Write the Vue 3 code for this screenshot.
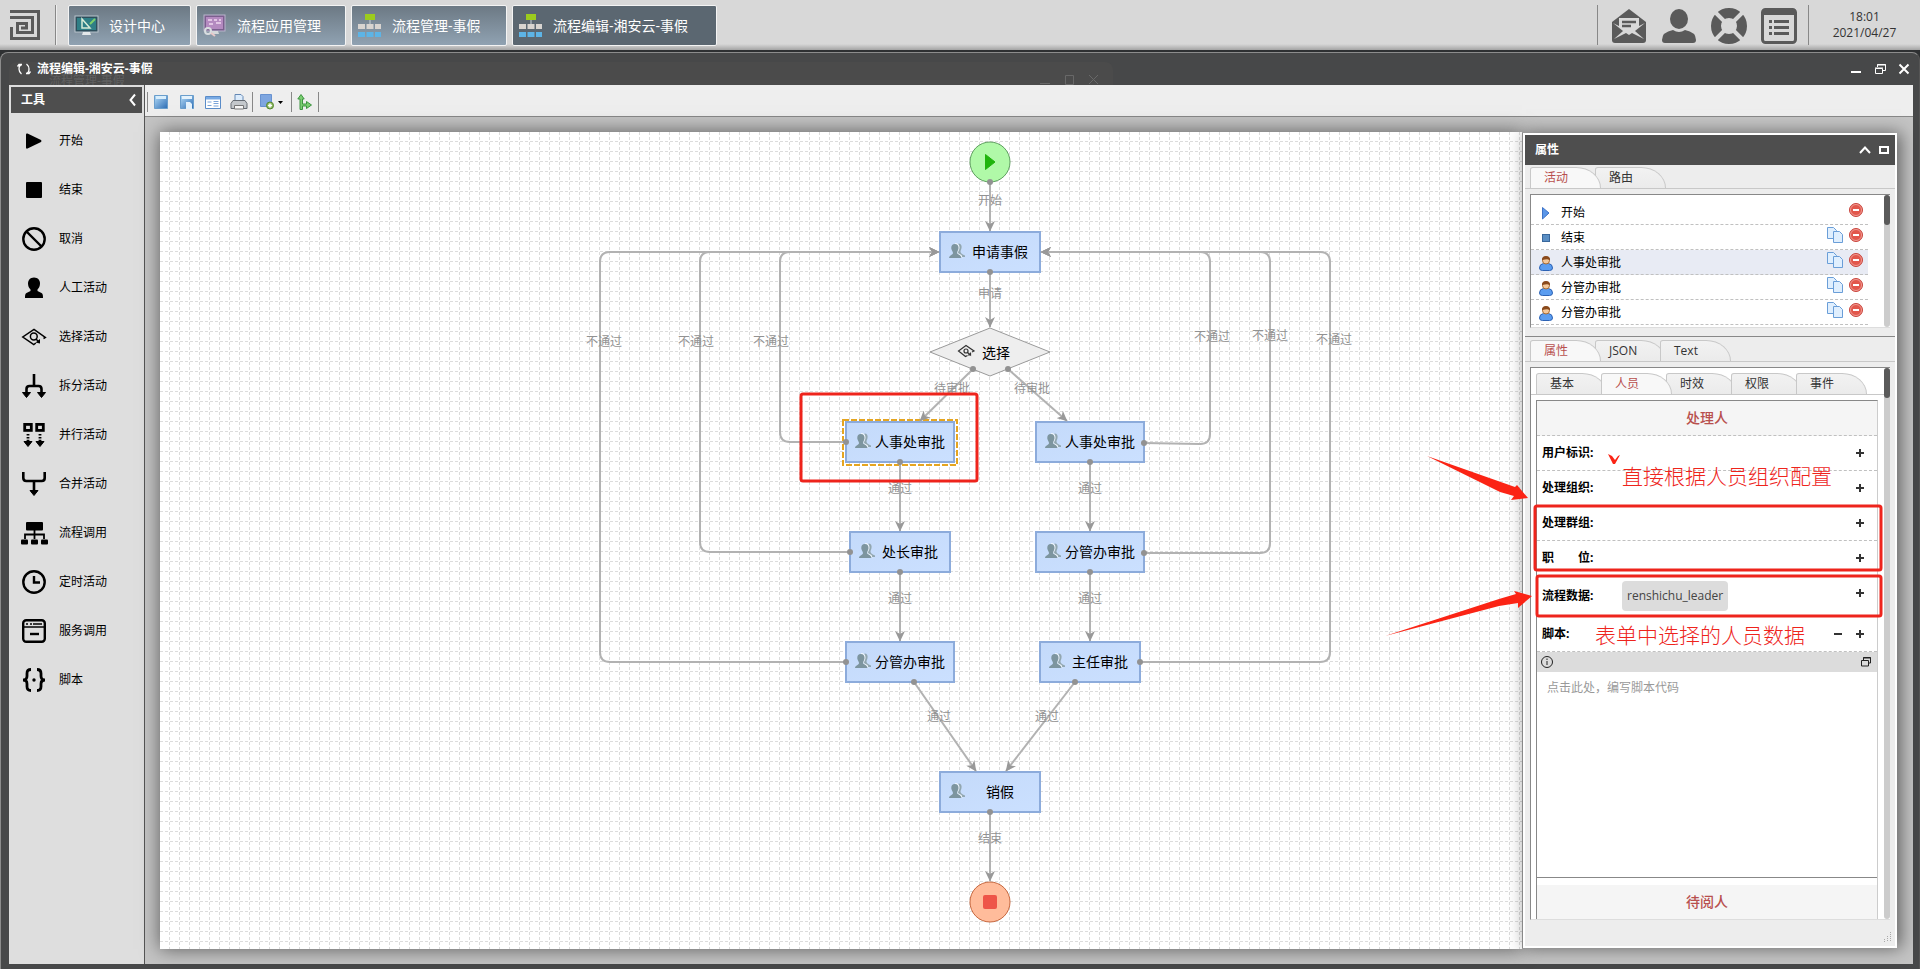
<script setup>
import { ref } from 'vue'

const tasks = [
  { name: '设计中心', icon: 'design', width: 'w1' },
  { name: '流程应用管理', icon: 'app', width: 'w2' },
  { name: '流程管理-事假', icon: 'flow', width: 'w3' },
  { name: '流程编辑-湘安云-事假', icon: 'flow', width: 'w4', active: true },
]

const taskIcons = {
  design:
    '<rect x="1" y="3" width="23" height="16" fill="#2f4f5c" stroke="#b9c4cc"/><rect x="3" y="5" width="19" height="12" fill="#2f7f86"/><path d="M8 15V6l8 9z" fill="none" stroke="#d8ecd8" stroke-width="1.5"/><path d="M16 11l5-5" stroke="#7fd06a" stroke-width="2"/><path d="M9 19h7l1 3H8z" fill="#e4e8ea"/>',
  app:
    '<rect x="2" y="2" width="21" height="16" fill="#7b5f8e" stroke="#b9b4cc"/><rect x="4" y="4" width="17" height="12" fill="#b48ac0"/><path d="M6 7h4M12 7h3M17 7h2M7 11h4M14 10h5" stroke="#f0d8f0" stroke-width="1.5"/><path d="M10 18h6l1 3H9z" fill="#d4d8da"/><circle cx="6" cy="18" r="3" fill="none" stroke="#d9dde0" stroke-width="2"/><path d="M9 20l4 3" stroke="#e8c8c8" stroke-width="2"/>',
  flow:
    '<rect x="8" y="1" width="10" height="6" fill="#9ccc1e"/><path d="M13 7v4" stroke="#c8d0d6" stroke-width="1"/><path d="M1 11h7v5H1zM9.500 11h7v5h-7zM18 11h6v5h-6z" fill="#d8d4d0"/><path d="M1 19h7v5H1zM9.500 19h7v5h-7zM18 19h6v5h-6z" fill="#5db4e6"/>',
}

const tools = [
  { name: '开始', d: '<path d="M4 5.500Q4 4 5.500 4.500L19 11q1 1 0 2L5.500 19.500Q4 20 4 18.500z"/>' },
  { name: '结束', d: '<rect x="4" y="4" width="16" height="16" rx="1"/>' },
  { name: '取消', d: '<g fill="none" stroke="#000" stroke-width="2.400"><circle cx="12" cy="12" r="10.700"/><path d="M4.500 4.500l15 15"/></g>' },
  { name: '人工活动', d: '<path d="M12 1.500c4 0 6 2.800 6 6 0 2.500-1 4.500-2.500 6v1.500l4 2c1.500.800 1.500 3 1.500 5H3c0-2 0-4.200 1.500-5l4-2v-1.500C7 12 6 10 6 7.500c0-3.200 2-6 6-6z"/>' },
  { name: '选择活动', d: '<g fill="none" stroke="#000" stroke-width="1.500"><path d="M21.500 13.500l1.800-1L12 4.500.800 12l11 7.500 2-1.500"/><circle cx="11.800" cy="11.500" r="3.400"/><path d="M14 14l3 3"/></g><path d="M13.500 17.500l4.500-3.500v4.500z"/>' },
  { name: '拆分活动', d: '<g fill="none" stroke="#000" stroke-width="2.600"><path d="M12 0v11M4.500 19v-4q0-3 3-3h9q3 0 3 3v4"/></g><path d="M.500 18.500h8L4.500 23.500zM15.500 18.500h8l-4 5z" stroke="#000" stroke-linejoin="round"/>' },
  { name: '并行活动', d: '<g fill="none" stroke="#000" stroke-width="2.800"><rect x="2.700" y="1.400" width="6.600" height="6"/><rect x="14.700" y="1.400" width="6.600" height="6"/><path d="M6 11v8M18 11v8" stroke-dasharray="1.600 1.300"/></g><path d="M2 18.500h8L6 23.500zM14 18.500h8l-4 5z" stroke="#000" stroke-linejoin="round"/>' },
  { name: '合并活动', d: '<g fill="none" stroke="#000" stroke-width="2.600"><path d="M1.300 0v6q0 3 3 3h15.400q3 0 3-3V0M12 9v10"/></g><path d="M8 18.500h8l-4 5z" stroke="#000" stroke-linejoin="round"/>' },
  { name: '流程调用', d: '<rect x="4" y="1" width="17" height="8.500" rx="1"/><path d="M12.500 9v9M3 18v-4.500h19V18" fill="none" stroke="#000" stroke-width="1.800"/><rect x="-1" y="18.500" width="7" height="5" rx="1"/><rect x="9" y="18.500" width="7" height="5" rx="1"/><rect x="19" y="18.500" width="7" height="5" rx="1"/>' },
  { name: '定时活动', d: '<g fill="none" stroke="#000" stroke-width="2.400"><circle cx="12" cy="12" r="10.700"/><path d="M12 6v6.500h6"/></g>' },
  { name: '服务调用', d: '<g fill="none" stroke="#000" stroke-width="2.400"><rect x="1.200" y="1.200" width="21.600" height="21.600" rx="3"/><path d="M1 8h22" stroke-width="1.500"/><path d="M4 5h2M8 5h2M11 5h9" stroke-width="1.600"/><path d="M8 15h9" /></g>' },
  { name: '脚本', d: '<g fill="none" stroke="#000" stroke-width="2.800"><path d="M9 1.500q-4 0-4 4v2.500q0 4-4 4 4 0 4 4v2.500q0 4 4 4M15 1.500q4 0 4 4v2.500q0 4 4 4-4 0-4 4v2.500q0 4-4 4"/></g><circle cx="12" cy="12" r="1.700"/>' },
]

const edges = [
  'M830 50V99',
  'M830 140V195',
  'M813 237L760 289',
  'M848 237L907 289',
  'M740 330V399',
  'M740 440V509',
  'M930 330V399',
  'M930 440V509',
  'M754 550L816 639',
  'M915 550L846 639',
  'M830 680V749',
  'M686 310H630Q620 310 620 300V130Q620 120 630 120H779',
  'M690 420H550Q540 420 540 410V130Q540 120 550 120H779',
  'M686 530H450Q440 530 440 520V130Q440 120 450 120H779',
  'M984 311L1040 312Q1050 312 1050 302V130Q1050 120 1040 120H881',
  'M984 421H1100Q1110 421 1110 411V130Q1110 120 1100 120H881',
  'M980 530H1160Q1170 530 1170 520V130Q1170 120 1160 120H881',
]
const dots = [
  [830, 50], [830, 140], [813, 237], [848, 237], [740, 330], [740, 440], [930, 330], [930, 440],
  [754, 550], [915, 550], [830, 680], [686, 310], [690, 420], [686, 530], [984, 311], [984, 421], [980, 530],
]
const nodes = [
  { t: '申请事假', x: 830, y: 120, w: 100 },
  { t: '人事处审批', x: 740, y: 310, w: 108 },
  { t: '人事处审批', x: 930, y: 310, w: 108 },
  { t: '处长审批', x: 740, y: 420, w: 100 },
  { t: '分管办审批', x: 930, y: 420, w: 108 },
  { t: '分管办审批', x: 740, y: 530, w: 108 },
  { t: '主任审批', x: 930, y: 530, w: 100 },
  { t: '销假', x: 830, y: 660, w: 100 },
]
const labels = [
  ['开始', 830, 69], ['申请', 830, 162], ['不通过', 444, 210], ['不通过', 536, 210], ['不通过', 611, 210],
  ['不通过', 1052, 205], ['不通过', 1110, 204], ['不通过', 1174, 208], ['待审批', 792, 257], ['待审批', 872, 257],
  ['通过', 740, 357], ['通过', 740, 467], ['通过', 930, 357], ['通过', 930, 467],
  ['通过', 779, 585], ['通过', 887, 585], ['结束', 830, 707],
]

const activities = [
  { name: '开始', kind: 'start' },
  { name: '结束', kind: 'end', copy: true },
  { name: '人事处审批', kind: 'user', copy: true, selected: true },
  { name: '分管办审批', kind: 'user', copy: true },
  { name: '分管办审批', kind: 'user', copy: true },
]
const fields = ['用户标识:', '处理组织:', '处理群组:', '职\u3000\u3000位:']
const script = ref('')
</script>

<template>
  <div class="desktop">
    <header class="taskbar">
      <svg class="logo" width="30" height="30" viewBox="0 0 30 30" fill="none" stroke="#5a5a5a" stroke-width="3">
        <path d="M0 1.500H28.500V28.500H1.500V17M0 7.500H22.500V22.500H7.500V13.500H16.500V18H11" />
      </svg>
      <span class="vline"></span>
      <nav class="tasks">
        <button v-for="t in tasks" :key="t.name" type="button" class="task" :class="[t.width, { active: t.active }]">
          <svg width="25" height="25" viewBox="0 0 25 25" v-html="taskIcons[t.icon]"></svg>
          <span>{{ t.name }}</span>
        </button>
      </nav>
      <div class="tray">
        <button type="button" aria-label="消息">
          <svg width="36" height="36" viewBox="0 0 36 36">
            <path d="M1 14L18 1l17 13v18q0 3-3 3H4q-3 0-3-3z" fill="#5a5a5a" />
            <path d="M8 10h20v8l6-3-10 8 9 8-12-6-3 2-3-2-12 6 9-8-10-8 6 3z" fill="#d8d8d8" />
            <path d="M11 14h14M11 18h9" stroke="#5a5a5a" stroke-width="2.500" />
          </svg>
        </button>
        <button type="button" aria-label="用户">
          <svg width="36" height="36" viewBox="0 0 36 36" fill="#5a5a5a">
            <ellipse cx="18" cy="11" rx="9" ry="10" />
            <path d="M1 32q0-8 11-10 6 4 12 0 11 2 11 10 0 3-3 3H4q-3 0-3-3z" />
          </svg>
        </button>
        <button type="button" aria-label="帮助">
          <svg width="36" height="36" viewBox="0 0 36 36" fill="none">
            <circle cx="18" cy="18" r="13" stroke="#5a5a5a" stroke-width="10" />
            <path d="M4 4l9 9M32 4l-9 9M4 32l9-9M32 32l-9-9" stroke="#d8d8d8" stroke-width="4" />
          </svg>
        </button>
        <button type="button" aria-label="列表">
          <svg width="36" height="36" viewBox="0 0 36 36" fill="none" stroke="#5a5a5a">
            <rect x="1.500" y="1.500" width="33" height="33" rx="3" stroke-width="3" />
            <path d="M1 4.500h34" stroke-width="5" />
            <path d="M8 13.500h3M8 19.500h3M8 25.500h3M13 13.500h15M13 19.500h15M13 25.500h15" stroke-width="3" />
          </svg>
        </button>
      </div>
      <div class="clock"><span>18:01</span><span>2021/04/27</span></div>
    </header>

    <main class="window">
      <div class="titlebar">
        <div class="ghost">
          <span>流程管理-事假</span>
          <svg width="62" height="12" viewBox="0 0 62 12" fill="none" stroke="#686868">
            <path d="M1 10.500h10M26.500 2.500h8v9h-8zM50 2l9 9M59 2l-9 9" />
          </svg>
        </div>
        <svg width="14" height="14" viewBox="0 0 14 14" fill="none" stroke="#fff" stroke-width="1.300">
          <path d="M5 2.500Q2 3 2 7q0 3 2.500 5M.500 4.500L2 2.500h3M9 11.500q3-.500 3-4.500 0-3-2.500-5M13.500 9.500L12 11.500H9" />
        </svg>
        <h1>流程编辑-湘安云-事假</h1>
        <div class="controls">
          <button type="button" aria-label="最小化"><svg width="12" height="12" viewBox="0 0 12 12"><path d="M1 9h10" stroke="#fff" stroke-width="2" /></svg></button>
          <button type="button" aria-label="还原"><svg width="12" height="12" viewBox="0 0 12 12" fill="none" stroke="#fff"><path d="M3.500 4V1.500h8v6H9M3 2h9M1.500 5.500h7v5h-7zM1 5h8" /></svg></button>
          <button type="button" aria-label="关闭"><svg width="12" height="12" viewBox="0 0 12 12"><path d="M1.500 1.500l9 9M10.500 1.500l-9 9" stroke="#fff" stroke-width="2" /></svg></button>
        </div>
      </div>

      <div class="body">
        <aside class="sidebar">
          <div class="side-head">
            <h2>工具</h2>
            <button type="button" aria-label="收起"><svg width="8" height="14" viewBox="0 0 8 14" fill="none"><path d="M6 1.500L1.500 7 6 12.500" stroke="#fff" stroke-width="2" /></svg></button>
          </div>
          <ul class="tools">
            <li v-for="t in tools" :key="t.name">
              <button type="button">
                <svg width="24" height="24" viewBox="0 0 24 24" v-html="t.d"></svg>
                <span>{{ t.name }}</span>
              </button>
            </li>
          </ul>
        </aside>

        <section class="main">
          <div class="toolbar">
            <svg width="0" height="0" class="defs">
              <defs>
                <linearGradient id="blue" x2="1" y2="1"><stop offset="0" stop-color="#b4dcf8" /><stop offset="1" stop-color="#2c6cb4" /></linearGradient>
              </defs>
            </svg>
            <span class="sep"></span>
            <button type="button" aria-label="保存"><svg width="16" height="16" viewBox="0 0 16 16"><path d="M1.500 1.500h13v13h-13z" fill="url(#blue)" stroke="#6a9ecc" /><path d="M3 2h10v3H3z" fill="#d8eefc" /></svg></button>
            <button type="button" aria-label="另存为"><svg width="16" height="16" viewBox="0 0 16 16"><path d="M1.500 1.500h13v13h-13z" fill="url(#blue)" stroke="#6a9ecc" /><path d="M3 2h10v3H3zM7 8h4l2 2v5H7z" fill="#e4f2fc" /></svg></button>
            <button type="button" aria-label="属性"><svg width="16" height="16" viewBox="0 0 16 16"><path d="M.500 2.500h15v12H.500z" fill="#fff" stroke="#5a8cc8" /><path d="M1 3h14v2.500H1z" fill="#78aae4" /><path d="M2.500 8h4M2.500 11.500h4M8.500 7.500h5M8.500 9.500h5M8.500 12h5" stroke="#7aa4d8" /></svg></button>
            <button type="button" aria-label="打印"><svg width="18" height="18" viewBox="0 0 18 18"><path d="M5 8V1.500h6l2 2V8" fill="#dcecfc" stroke="#6488b4" /><path d="M3 7.500h12l2 3v5H1v-5z" fill="#c4c8cc" stroke="#666c74" /><path d="M4.500 12.500h9V16h-9z" fill="#f8f8f8" stroke="#777" /></svg></button>
            <span class="sep"></span>
            <button type="button" class="wide" aria-label="添加节点"><svg width="26" height="17" viewBox="0 0 26 17"><path d="M1.500 1.500h11v12h-11z" fill="#7ea6e0" stroke="#6892d0" /><circle cx="11" cy="12.500" r="3.500" fill="#8fbc62" stroke="#55852f" /><path d="M11 10.500v4M9 12.500h4" stroke="#fff" stroke-width="1.500" /><path d="M19 8h5l-2.500 3z" /></svg></button>
            <span class="sep"></span>
            <button type="button" aria-label="连线"><svg width="16" height="16" viewBox="0 0 16 16"><path d="M3 15.500V5H.800L4 .500 7.200 5H5.500v5h4V7.500l5 3.500-5 3.500V12h-4v3.500z" fill="#7ccf72" stroke="#3d9440" /></svg></button>
            <span class="sep"></span>
          </div>

          <div class="workspace">
            <div class="canvas">
              <svg class="flow" width="100%" height="100%">
                <defs>
                  <pattern id="grid" width="10" height="10" patternUnits="userSpaceOnUse">
                    <path d="M9.500 0V10M0 9.500H10" stroke="#dcdcdc" stroke-dasharray="3 2" />
                  </pattern>
                  <marker id="arrow" markerWidth="11" markerHeight="10" refX="10" refY="5" orient="auto" markerUnits="userSpaceOnUse">
                    <path d="M0 0L10.500 5L0 10L3 5z" fill="#999" />
                  </marker>
                  <linearGradient id="node" x2="1" y2="1"><stop offset="0" stop-color="#c4dafa" /><stop offset="1" stop-color="#cbe0ff" /></linearGradient>
                  <symbol id="people" viewBox="0 0 16 16">
                    <path d="M9.500.500c2.500 0 3.500 2 3 4.500-.200 1.500-1 2.500-1 3.500 0 1.500 1 2.500 4.500 4V14h-4.500L8 9z" fill="#92a7b0" />
                    <path d="M6 0c3 0 4.800 2 4.500 5C10.300 7.500 9 8.500 9 9.500c0 1.500 3.500 1.500 4 3.500l.500 2.500L9 12z" fill="#eef5fd" />
                    <path d="M5.800 1c2.700 0 4 2 3.700 4.500C9.300 7.500 8 8.500 8 10c0 1.500 4 1.500 4.500 5H0c.300-3 4-3 4-5 0-1.500-1.500-2.500-1.700-4.500C2 3 3.200 1 5.800 1z" fill="#7d959f" />
                  </symbol>
                </defs>
                <rect width="100%" height="100%" fill="url(#grid)" />

                <rect v-for="(n, i) in nodes" :key="'r' + i" :x="n.x - n.w / 2" :y="n.y - 20" :width="n.w" height="40" class="node" />
                <circle cx="830" cy="30" r="20" class="start" />
                <path d="M825.500 22.500L835 30l-9.500 7.500z" fill="#1fb40c" stroke="#1fb40c" stroke-linejoin="round" />
                <circle cx="830" cy="770" r="20" class="end" />
                <rect x="823" y="763" width="14" height="14" rx="2" fill="#ee5548" />
                <path d="M770 220L830 196L890 220L830 244z" class="choice" />
                <rect x="683" y="288" width="114" height="45" class="selection" />

                <path v-for="d in edges" :key="d" :d="d" class="edge" marker-end="url(#arrow)" />
                <circle v-for="(p, i) in dots" :key="'d' + i" :cx="p[0]" :cy="p[1]" r="3" class="dot" />

                <g v-for="(n, i) in nodes" :key="'n' + i">
                  <use href="#people" :x="n.x - n.w / 2 + 9" :y="n.y - 9" width="16" height="16" />
                  <text :x="n.x + 10" :y="n.y + 5" class="node-text">{{ n.t }}</text>
                </g>
                <g fill="none" stroke="#333" stroke-width="1.200">
                  <path d="M812 220l2-1-8-5.500-7.500 5.500 7 5.500 2-1" />
                  <circle cx="806" cy="219" r="2" />
                  <path d="M807.500 220.500l3 2.500v-2.500M810.500 223h-2.500" />
                </g>
                <text x="836" y="226" class="node-text">选择</text>
                <text v-for="(l, i) in labels" :key="'l' + i" :x="l[1]" :y="l[2] + 4" class="edge-text">{{ l[0] }}</text>
                <rect x="641" y="262" width="176" height="87" rx="2" class="mark" />
              </svg>
            </div>

            <section class="panel">
              <div class="panel-head">
                <h2>属性</h2>
                <button type="button" aria-label="折叠"><svg width="12" height="12" viewBox="0 0 12 12" fill="none"><path d="M1 9l5-5.500L11 9" stroke="#fff" stroke-width="2" /></svg></button>
                <button type="button" aria-label="最大化"><svg width="12" height="12" viewBox="0 0 12 12" fill="none"><path d="M2 3h8v6H2z" stroke="#fff" stroke-width="2" /></svg></button>
              </div>
              <div class="tabs">
                <button type="button" class="tab on">活动</button><button type="button" class="tab">路由</button>
              </div>
              <div class="list-box">
                <ul class="list">
                  <li v-for="(a, i) in activities" :key="i" :class="{ selected: a.selected }">
                    <svg width="16" height="16" viewBox="0 0 16 16" class="kind">
                      <path v-if="a.kind === 'start'" d="M4.500 2.500L11 8l-6.500 6z" fill="#5a96e8" stroke="#3f74c8" />
                      <rect v-else-if="a.kind === 'end'" x="4.500" y="4.500" width="7" height="7" fill="#5a8ec4" stroke="#3a689c" />
                      <g v-else>
                        <path d="M1.500 13q0-4 4-4.500h5q4 .500 4 4.500 0 2.500-3 2.500h-7q-3 0-3-2.500z" fill="#5b9df0" stroke="#2c62b4" />
                        <circle cx="8" cy="5.500" r="3.500" fill="#f4c89a" stroke="#a86c34" />
                        <path d="M4 5.500Q3.500 1 8 1t4 4.500Q10 3.500 7 4.500 5 4.500 4 5.500z" fill="#8a4a1c" />
                      </g>
                    </svg>
                    <span>{{ a.name }}</span>
                    <button v-if="a.copy" type="button" aria-label="复制">
                      <svg width="16" height="16" viewBox="0 0 16 16" fill="#e0effe" stroke="#6a9ed8"><path d="M.500.500h6l3 3v8h-9z" /><path d="M6.500 4.500h6l3 3v8h-9z" /></svg>
                    </button>
                    <button type="button" aria-label="删除">
                      <svg width="16" height="16" viewBox="0 0 16 16"><circle cx="8" cy="8" r="6.500" fill="#e2574c" stroke="#c8463e" /><circle cx="8" cy="8" r="5.500" fill="none" stroke="#f09a92" /><path d="M5 8h6" stroke="#fff" stroke-width="2" /></svg>
                    </button>
                  </li>
                </ul>
                <div class="bar"><i></i></div>
              </div>
              <div class="tabs lower">
                <button type="button" class="tab on">属性</button><button type="button" class="tab">JSON</button><button type="button" class="tab">Text</button>
              </div>
              <div class="prop-box">
                <div class="prop">
                  <div class="tabs inner">
                    <button type="button" class="tab">基本</button><button type="button" class="tab on">人员</button><button type="button" class="tab">时效</button><button type="button" class="tab">权限</button><button type="button" class="tab">事件</button>
                  </div>
                  <div class="form">
                    <h3>处理人</h3>
                    <div v-for="f in fields" :key="f" class="field">
                      <b>{{ f }}</b>
                      <button type="button" aria-label="添加"><svg width="8" height="8" viewBox="0 0 8 8"><path d="M0 4h8M4 0v8" stroke="#333" stroke-width="2" /></svg></button>
                    </div>
                    <div class="field data">
                      <b>流程数据:</b>
                      <span class="chip">renshichu_leader</span>
                      <button type="button" aria-label="添加"><svg width="8" height="8" viewBox="0 0 8 8"><path d="M0 4h8M4 0v8" stroke="#333" stroke-width="2" /></svg></button>
                    </div>
                    <div class="field">
                      <b><label for="script">脚本:</label></b>
                      <button type="button" aria-label="移除"><svg width="8" height="8" viewBox="0 0 8 8"><path d="M0 4h8" stroke="#333" stroke-width="2" /></svg></button>
                      <button type="button" aria-label="添加"><svg width="8" height="8" viewBox="0 0 8 8"><path d="M0 4h8M4 0v8" stroke="#333" stroke-width="2" /></svg></button>
                    </div>
                    <div class="code-bar">
                      <svg width="12" height="12" viewBox="0 0 12 12" fill="none" stroke="#222"><circle cx="6" cy="6" r="5.500" /><path d="M6 5v4M6 2.500v1.500" /></svg>
                      <button type="button" aria-label="弹出"><svg width="10" height="10" viewBox="0 0 10 10" fill="none" stroke="#222"><path d="M2.500 3V.500h7v5.500H8M.500 3.500h7v5.500h-7zM2 1h8" /></svg></button>
                    </div>
                    <textarea id="script" v-model="script" placeholder="点击此处，编写脚本代码"></textarea>
                    <h3 class="second">待阅人</h3>
                  </div>
                </div>
                <div class="bar"><i></i></div>
              </div>
              <svg class="grip" width="12" height="12" viewBox="0 0 12 12"><path d="M10.500 2v10M7.500 6v6M4.500 9v3" stroke="#aaa" stroke-dasharray="1 1" /></svg>

              <svg class="notes" width="375" height="815" viewBox="0 0 375 815">
                <rect x="13" y="373" width="346" height="64" rx="2" class="mark" />
                <rect x="15" y="443" width="344" height="40" rx="2" class="mark" />
                <path d="M-95 323L-7 354L-5 352L6 365L-11 367L-8 363L-22 359z" class="pointer" />
                <path d="M-137 503L-23 466L-6 461L-8 458L10 463L-4 475L-4 470L-23 473z" class="pointer" />
                <path d="M86 321l4 2 3 4 3-4 2-1-5 9h-2z" class="pointer" />
                <text x="100" y="351">直接根据人员组织配置</text>
                <text x="73" y="510">表单中选择的人员数据</text>
              </svg>
            </section>
          </div>
        </section>
      </div>
    </main>
  </div>
</template>

<style>
body {
  margin: 0;
}
</style>

<style scoped>
.desktop,
.desktop * {
  box-sizing: border-box;
}
.desktop {
  display: flex;
  flex-direction: column;
  height: 100vh;
  overflow: hidden;
  background: #2e3032;
  color: #000;
  font: 12px/18px 'Open Sans', 'Noto Sans CJK SC', sans-serif;
}
button {
  padding: 0;
  border: 0;
  background: none;
  color: inherit;
  font: inherit;
  cursor: pointer;
}
svg {
  display: block;
  flex: none;
  overflow: visible;
}
h1,
h2,
h3 {
  margin: 0;
  font-size: 12px;
  font-weight: 700;
}
ul {
  margin: 0;
  padding: 0;
  list-style: none;
}

.taskbar {
  display: flex;
  flex: none;
  height: 50px;
  padding: 5px 22px 0 10px;
  background: linear-gradient(#d8d8d8 44px, #a4a4a4);
}
.logo {
  margin-top: 5px;
}
.vline {
  width: 2px;
  height: 40px;
  margin: 0 11px 0 15px;
  border-left: 1px solid #888;
  border-right: 1px solid #eee;
}
.tasks {
  display: flex;
  flex: 1;
  gap: 5px;
}
.task {
  display: flex;
  align-items: center;
  gap: 10px;
  height: 41px;
  padding-left: 5px;
  border: 1px solid #f4f4f4;
  border-radius: 2px;
  background: linear-gradient(#6c7984, #90a2b2);
  color: #fff;
  font-size: 14px;
}
.w1 {
  width: 123px;
}
.w2 {
  width: 150px;
}
.w3 {
  width: 156px;
}
.w4 {
  width: 205px;
}
.task.active {
  background: #5b6771;
}
.tray {
  display: flex;
  gap: 14px;
  height: 40px;
  padding: 2px 11px 0 13px;
  border-left: 1px solid #888;
  border-right: 1px solid #888;
}
.clock {
  display: flex;
  flex-direction: column;
  width: 89px;
  padding: 4px 0 0 22px;
  line-height: 16px;
  text-align: center;
  color: #333;
}

.window {
  display: flex;
  flex: 1;
  flex-direction: column;
  min-height: 0;
  margin-top: 2px;
  padding: 0 6px 5px 8px;
  border: 1px solid #8c8c8c;
  border-bottom: 0;
  border-right-color: #555;
  border-radius: 8px 8px 0 0;
  background: #474849;
}
.titlebar {
  position: relative;
  display: flex;
  flex: none;
  align-items: center;
  gap: 6px;
  height: 32px;
  padding: 0 3px 0 8px;
  color: #fff;
}
.ghost {
  position: absolute;
  top: 9px;
  right: 42%;
  bottom: 0;
  left: 0;
  display: flex;
  align-items: flex-end;
  justify-content: space-between;
  padding: 0 12px 0 40px;
  overflow: hidden;
  border-radius: 8px 8px 0 0;
  background: #4b4b4b;
  color: #606060;
}
.ghost span {
  margin-bottom: -5px;
}
.titlebar > svg,
.titlebar > h1,
.controls {
  z-index: 1;
}
.controls {
  display: flex;
  gap: 12px;
  margin-left: auto;
}
.body {
  display: flex;
  flex: 1;
  min-height: 0;
}
.sidebar {
  flex: none;
  width: 136px;
  padding: 2px;
  border-right: 1px solid #555;
  background: #dedede;
}
.side-head {
  display: flex;
  align-items: center;
  justify-content: space-between;
  height: 26px;
  padding: 0 5px 0 10px;
  background: #4e4e4e;
  color: #fff;
}
.tools {
  padding-top: 3px;
}
.tools button {
  display: flex;
  align-items: center;
  gap: 13px;
  width: 100%;
  height: 49px;
  padding: 1px 0 0 11px;
}
.main {
  display: flex;
  flex: 1;
  flex-direction: column;
  min-width: 0;
}
.toolbar {
  display: flex;
  flex: none;
  align-items: center;
  height: 32px;
  padding: 2px 2px 0;
  border-bottom: 1px solid #888;
  background: #eee;
}
.toolbar button {
  display: flex;
  justify-content: center;
  width: 26px;
}
.toolbar .wide {
  width: 38px;
}
.defs {
  position: absolute;
}
.sep {
  width: 1px;
  height: 20px;
  background: #888;
}
.workspace {
  display: flex;
  flex: 1;
  min-height: 0;
  padding: 15px 16px 15px 15px;
  background: #c4c4c4;
}
.canvas {
  flex: 1;
  min-width: 0;
  overflow: hidden;
  background: #fff;
  box-shadow: 0 0 18px rgba(0, 0, 0, 0.55);
}
.node {
  fill: url(#node);
  stroke: #8cabdb;
  stroke-width: 2;
}
.start {
  fill: #b0f9a8;
  stroke: #5f9f60;
}
.end {
  fill: #ffbc9b;
  stroke: #c7683f;
}
.choice {
  fill: #eee;
  stroke: #999;
}
.selection {
  fill: none;
  stroke: #e5a520;
  stroke-width: 2;
  stroke-dasharray: 6 2;
}
.edge {
  fill: none;
  stroke: #b2b2b2;
  stroke-width: 2;
}
.dot {
  fill: #929292;
}
.node-text {
  font-size: 14px;
  text-anchor: middle;
}
.edge-text {
  fill: #929292;
  font-size: 12px;
  text-anchor: middle;
}
.mark {
  fill: none;
  stroke: #ee241c;
  stroke-width: 3;
}
.pointer {
  fill: #fb2415;
}

.panel {
  position: relative;
  display: flex;
  flex: none;
  flex-direction: column;
  width: 375px;
  margin: 1px 0;
  padding: 2px;
  border-left: 1px solid #888;
  background: #ededed;
  box-shadow: inset 0 0 0 2px #fff, 4px 0 16px rgba(0, 0, 0, 0.5);
}
.panel-head {
  display: flex;
  flex: none;
  align-items: center;
  gap: 7px;
  height: 30px;
  margin-bottom: 2px;
  padding: 0 5px 0 10px;
  background: #4e4e4e;
  color: #fff;
}
.panel-head h2 {
  flex: 1;
}
.tabs {
  display: flex;
  flex: none;
  height: 22px;
  padding-left: 5px;
  border-bottom: 1px solid #c8c8c8;
}
.tab {
  position: relative;
  width: 71px;
  margin-right: -6px;
  padding-left: 13px;
  border: 1px solid #c8c8c8;
  border-bottom: 0;
  border-radius: 3px 26px 0 0 / 3px 22px 0 0;
  background: linear-gradient(#f2f2f2, #ebebeb);
  color: #333;
  text-align: left;
}
.tab.on {
  z-index: 1;
  background: #f8f8f8;
  color: #b8504e;
}
.list-box {
  display: flex;
  flex: none;
  height: 134px;
  margin: 5px 5px 8px;
  border-top: 1px solid #888;
  border-left: 1px solid #888;
  border-bottom: 1px solid #ddd;
  background: #fff;
}
.list {
  flex: 1;
  padding: 5px 16px 0 0;
}
.list li {
  display: flex;
  align-items: center;
  height: 25px;
  padding: 1px 4px 0 7px;
  border-bottom: 1px dashed #c0c0c0;
}
.list li span {
  flex: 1;
  margin-left: 7px;
}
.list li button {
  align-self: flex-start;
  margin: 1px 0 0 5px;
}
.list .selected {
  background: #e8ebf4;
}
.bar {
  flex: none;
  width: 6px;
  border-radius: 3px;
  background: #ccc;
}
.bar i {
  display: block;
  height: 30px;
  border-radius: 3px;
  background: #5a5a5a;
}
.lower {
  height: 26px;
  padding-top: 3px;
  border-top: 1px solid #888;
}
.prop-box {
  display: flex;
  flex: 1;
  min-height: 0;
  margin: 5px 5px 26px;
  border-top: 1px solid #888;
  border-left: 1px solid #888;
  border-bottom: 1px solid #ddd;
  background: #fff;
}
.prop {
  flex: 1;
  overflow: hidden;
}
.inner {
  margin-top: 5px;
}
.form {
  margin: 5px 6px 0 5px;
  border: 1px solid #ccc;
  border-top-color: #888;
  border-left-color: #888;
}
.form h3 {
  height: 35px;
  border-bottom: 1px dashed #c0c0c0;
  background: #f5f5f5;
  color: #b8504e;
  font-size: 14px;
  font-weight: 500;
  line-height: 33px;
  text-align: center;
}
.form .second {
  margin-top: 7px;
}
.field {
  display: flex;
  align-items: center;
  gap: 14px;
  height: 35px;
  padding: 0 13px 0 5px;
  border-bottom: 1px dashed #c0c0c0;
}
.field b {
  flex: 1;
}
.field.data {
  height: 41px;
}
.field.data b {
  flex: 0 0 66px;
}
.chip {
  height: 30px;
  padding: 0 5px;
  border-radius: 4px;
  background: #dcdcdc;
  color: #444;
  line-height: 30px;
}
.data button {
  margin-left: auto;
  padding-bottom: 6px;
}
.code-bar {
  display: flex;
  align-items: center;
  justify-content: space-between;
  height: 20px;
  padding: 0 6px 0 4px;
  background: #dcdcdc;
}
textarea {
  display: block;
  width: 100%;
  height: 206px;
  padding: 7px 10px;
  border: 0;
  border-bottom: 1px solid #888;
  outline: 0;
  color: #333;
  font: inherit;
  resize: none;
}
textarea::placeholder {
  color: #999;
}
.grip {
  position: absolute;
  right: 5px;
  bottom: 6px;
}
.notes {
  position: absolute;
  top: 0;
  left: -1px;
  z-index: 2;
  pointer-events: none;
}
.notes text {
  fill: #ee241c;
  font-size: 21px;
  font-weight: 300;
}
</style>
